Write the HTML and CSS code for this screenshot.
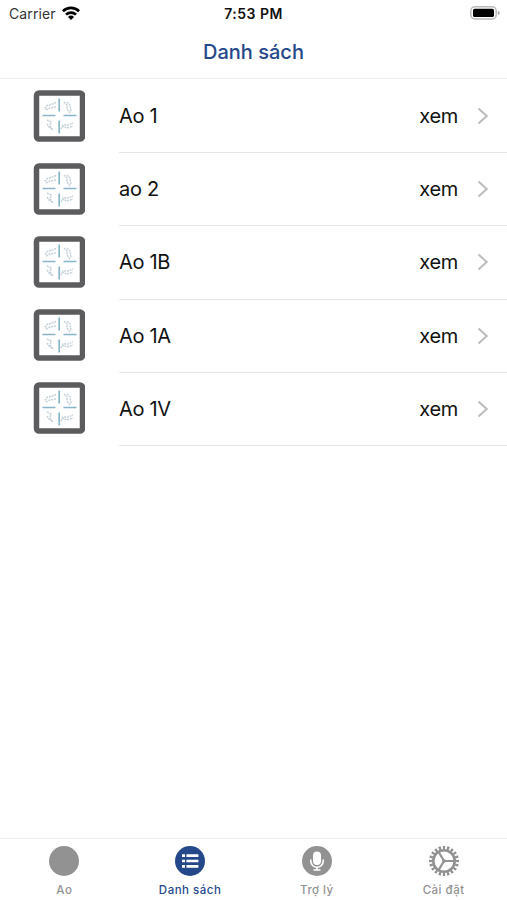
FILE: index.html
```html
<!DOCTYPE html>
<html lang="vi">
<head>
<meta charset="utf-8">
<title>Danh sách</title>
<link rel="stylesheet" href="styles.css">
</head>
<body>
<svg class="defs" aria-hidden="true">
  <symbol id="pond" viewBox="0 0 52 52">
    <rect x="3.5" y="3" width="46" height="46" rx="2.5" fill="#fff" stroke="#5c5c5e" stroke-width="5.5"/>
    <g stroke="#89b5cb" stroke-width="1.7"><path d="M26.2 8.5v13M26.2 30.5v13M9.5 25.5h13M30.5 25.5h13"/></g>
    <g fill="none" stroke="#c6d2d9" stroke-width="1.5" stroke-dasharray="2 .8">
      <path d="M12 18.5l2-3 4-1 5-2M13 20l4-2 6-1"/>
      <path d="M31 12l3 3 0 4 3 4M34 12l3 3 1 7"/>
      <path d="M14 30l4 2-1 4 3 4M14 34l2 3 4 3"/>
      <path d="M28 39l2-4 5 0 5-2M29 36l5 2 6-2"/>
    </g>
  </symbol>
  <symbol id="chevron" viewBox="0 0 12 18"><path d="M1.5 1.5L9.7 9l-8.2 7.5" fill="none" stroke="#bdbdc0" stroke-width="2.1"/></symbol>
</svg>
<div class="screen">
  <header class="status">
    <div class="carrier"><span>Carrier</span>
      <svg class="wifi" viewBox="0 0 18 14"><g fill="none" stroke="#000" stroke-width="2.7"><path d="M.9 5.2a11.6 11.6 0 0 1 16.2 0M4 8.6a7.2 7.2 0 0 1 10 0"/></g><path d="M6 10.9a4.3 4.3 0 0 1 6 0l-3 3z"/></svg>
    </div>
    <div class="time">7:53 PM</div>
    <svg class="battery" viewBox="0 0 30 14"><rect x=".8" y=".8" width="25.4" height="12.2" rx="4" fill="#fff" stroke="#bababa" stroke-width="1.5"/><rect x="3" y="2.8" width="21" height="8.3" rx="1.6"/><path d="M27.8 4.8q2 .6 2 2.1t-2 2.1z" fill="#aaa"/></svg>
  </header>
  <h1 class="title">Danh sách</h1>
  <main class="list">
    <div class="row"><svg class="thumb"><use href="#pond"/></svg><div class="cell"><span>Ao 1</span><span class="view">xem</span><svg class="chevron"><use href="#chevron"/></svg></div></div>
    <div class="row"><svg class="thumb"><use href="#pond"/></svg><div class="cell"><span>ao 2</span><span class="view">xem</span><svg class="chevron"><use href="#chevron"/></svg></div></div>
    <div class="row"><svg class="thumb"><use href="#pond"/></svg><div class="cell"><span>Ao 1B</span><span class="view">xem</span><svg class="chevron"><use href="#chevron"/></svg></div></div>
    <div class="row"><svg class="thumb"><use href="#pond"/></svg><div class="cell"><span>Ao 1A</span><span class="view">xem</span><svg class="chevron"><use href="#chevron"/></svg></div></div>
    <div class="row"><svg class="thumb"><use href="#pond"/></svg><div class="cell"><span>Ao 1V</span><span class="view">xem</span><svg class="chevron"><use href="#chevron"/></svg></div></div>
  </main>
  <nav class="tabs">
    <div class="tab"><svg viewBox="0 0 30 30"><circle cx="15" cy="15" r="15"/></svg><span>Ao</span></div>
    <div class="tab active"><svg viewBox="0 0 30 30"><circle cx="15" cy="15" r="15"/><path d="M7 9.7h3M7 15h3M7 20.3h3M11.4 9.7h12M11.4 15h12M11.4 20.3h12" stroke="#fff" stroke-width="2.7"/></svg><span>Danh sách</span></div>
    <div class="tab"><svg viewBox="0 0 30 30"><circle cx="15" cy="15" r="15"/><rect x="11" y="5.5" width="8" height="13.5" rx="4" fill="#fff"/><path d="M8.8 13.5v1.6a6.2 6.2 0 0 0 12.4 0v-1.6M15 21.2v2.8M11.5 24h7" fill="none" stroke="#fff" stroke-width="1.6"/></svg><span>Trợ lý</span></div>
    <div class="tab"><svg viewBox="0 0 30 30"><g fill="none" stroke="#929292"><circle cx="15" cy="15" r="13.3" pathLength="80" stroke-width="3.4" stroke-dasharray="2.2 1.8" stroke-dashoffset="1.1"/><circle cx="15" cy="15" r="10.7" stroke-width="2.6"/><path d="M15 15h10M15 15l-5.3-9M15 15l-5.3 9" stroke-width="2.2"/></g><circle cx="15" cy="15" r="1.8"/></svg><span>Cài đặt</span></div>
  </nav>
</div>
</body>
</html>
```
FILE: styles.css
```css
* { box-sizing: border-box; }
body { margin: 0; background: #fff; color: #111; font-family: Inter, "Liberation Sans", sans-serif; }
.defs { position: absolute; width: 0; height: 0; }
.screen { display: flex; flex-direction: column; height: 900px; overflow: hidden; }
.status { display: grid; grid-template-columns: 1fr auto 1fr; align-items: center; height: 27px; padding: 0 7px 0 9px; font-size: 14px; }
.carrier { display: flex; align-items: center; gap: 6px; color: #333; letter-spacing: .12px; }
.wifi { width: 18px; height: 14px; margin-top: -2px; }
.time { font-size: 14px; font-weight: 600; letter-spacing: .5px; margin-right: 2px; }
.battery { width: 30px; height: 14px; margin-top: -1px; justify-self: end; }
.title { height: 52px; margin: 0; border-bottom: 1px solid #efefef; color: #24488a; font-size: 20px; font-weight: 550; line-height: 50px; text-align: center; }
.list { flex: 1; }
.row { display: flex; align-items: center; height: 73.2px; padding-left: 33px; }
.thumb { width: 52px; height: 52px; margin-right: 34px; }
.cell { display: flex; flex: 1; align-items: center; height: 100%; padding-right: 18px; border-bottom: 1px solid #e6e6e6; font-size: 20px; letter-spacing: -.3px; transform: translateY(1px); }
.view { margin-left: auto; }
.chevron { width: 12px; height: 18px; margin-left: 19px; }
.tabs { display: grid; grid-template-columns: repeat(4, 1fr); height: 62px; border-top: 1px solid #eee; }
.tab { display: flex; flex-direction: column; align-items: center; padding-top: 7px; color: #929292; font-size: 11.5px; font-weight: 500; letter-spacing: .5px; line-height: 14px; }
.tab:first-child { padding-left: 2px; }
.tab svg { width: 30px; height: 30px; margin-bottom: 7px; fill: #929292; }
.tab.active { color: #24488a; }
.tab.active svg { fill: #24488a; }
```
